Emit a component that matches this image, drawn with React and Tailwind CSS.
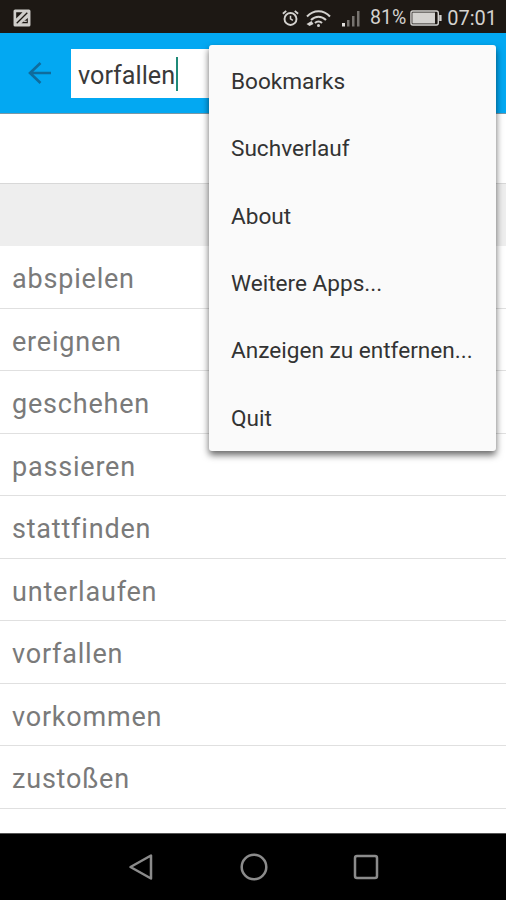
import React from "react";

const words = ["abspielen","ereignen","geschehen","passieren","stattfinden","unterlaufen","vorfallen","vorkommen","zustoßen"];
const menu = ["Bookmarks","Suchverlauf","About","Weitere Apps...","Anzeigen zu entfernen...","Quit"];

function StatusBar() {
  return (
    <div className="h-[33px] shrink-0 bg-[#1d1814] flex items-center justify-between pl-[13px] pr-[9px] pt-[2px] text-[#d4d2cf]">
      <svg width="18" height="18" viewBox="0 0 17 17">
        <rect x="0.5" y="0.5" width="16" height="16" rx="1.5" fill="#cfcdca" />
        <path d="M3 3h6L3 9z" fill="#1d1814" />
        <path d="M3.5 13.5L13.5 3.5" stroke="#1d1814" strokeWidth="1.2" />
        <path d="M8 13.5h6v-5z" fill="#1d1814" />
        <rect x="10" y="11" width="3" height="1.2" fill="#cfcdca" />
      </svg>
      <div className="flex items-center font-['Roboto',sans-serif] text-[19.500px] leading-none">
        <svg width="19" height="20" viewBox="0 0 20 20" fill="none" stroke="#d4d2cf" className="mr-[5px]">
          <circle cx="10" cy="11" r="6.3" strokeWidth="2" />
          <path d="M10 7.5V11l2.5 1.6" strokeWidth="1.6" />
          <path d="M2 5.5L5.5 2.5M18 5.5L14.500 2.500" strokeWidth="2" />
        </svg>
        <svg width="27" height="20" viewBox="0 0 27 20" fill="none" stroke="#d4d2cf" strokeWidth="2" className="mr-[9px]">
          <path d="M2 8.5C8.5 1.5 18.5 1.5 25 8.5" />
          <path d="M6 12C10.500 7.500 16.500 7.500 21 12" />
          <path d="M10 15C12 13 15 13 17 15" />
          <circle cx="13.500" cy="17.500" r="1.500" fill="#d4d2cf" stroke="none" />
          <path d="M1.500 16l5-3 2 3-4 2z" fill="#d4d2cf" stroke="none" />
        </svg>
        <svg width="21" height="20" viewBox="0 0 21 20" className="mr-[8px]">
          <rect x="1" y="15" width="3" height="3.500" fill="#e2e0dd" />
          <rect x="6" y="12" width="2.500" height="6.500" fill="#77736f" />
          <rect x="11" y="8" width="2.500" height="10.500" fill="#77736f" />
          <rect x="16" y="3" width="2.500" height="15.500" fill="#77736f" />
        </svg>
        <span>81%</span>
        <svg width="33" height="18" viewBox="0 0 35 18" className="ml-[4px] mr-[2px]" preserveAspectRatio="none">
          <rect x="1" y="2" width="29" height="14" rx="2" fill="#1d1814" stroke="#d4d2cf" strokeWidth="1.500" />
          <rect x="2.500" y="3.500" width="24" height="11" fill="#d4d2cf" />
          <rect x="31" y="6" width="2.500" height="6" fill="#d4d2cf" />
        </svg>
        <span className="text-[20px] ml-[2px]">07:01</span>
      </div>
    </div>
  );
}

function AppBar() {
  return (
    <div className="h-[81px] shrink-0 bg-[#03a8f2] border-b border-[#7b98a6] flex items-center pl-[28px]">
      <svg width="24" height="24" viewBox="0 0 24 24" fill="none" stroke="#0f6c9d" strokeWidth="2.600" className="mr-[19px]">
        <path d="M23 12H2M12.500 2L2 12l10.500 10" />
      </svg>
      <div className="w-[160px] h-[49px] bg-white flex items-center pl-[7px] pt-[5px] font-['Roboto',sans-serif] text-[25.200px] text-[#3a3a3a]">
        <span>vorfallen</span>
        <span className="w-[2px] h-[34px] -mt-[3px] ml-[1px] bg-[#1f8a78]" />
      </div>
    </div>
  );
}

export default function App() {
  return (
    <div className="relative w-[506px] h-[900px] overflow-hidden bg-white flex flex-col font-['Roboto',sans-serif]">
      <StatusBar />
      <AppBar />
      <div className="h-[69px] shrink-0 bg-white" />
      <div className="h-[63px] shrink-0 bg-[#eeeeee] border-t border-[#d8d8d8]" />
      <div className="flex-1 min-h-0 overflow-hidden">
        {words.map((w) => (
          <div key={w} className="h-[62.500px] border-b border-[#e0e0e0] flex items-center pl-[12px] pt-[5px] text-[27px] tracking-[0.8px] text-[#7a7a7a]">
            {w}
          </div>
        ))}
      </div>
      <div className="h-[67px] shrink-0 bg-black flex items-center justify-center gap-[85px] border-t border-[#555]">
        <svg width="28" height="28" viewBox="0 0 28 28" fill="none" stroke="#8b8b8b" strokeWidth="2.500" strokeLinejoin="round">
          <path d="M24 2.500V25.500L3.500 14z" />
        </svg>
        <svg width="28" height="28" viewBox="0 0 28 28" fill="none" stroke="#8b8b8b" strokeWidth="2.500">
          <circle cx="14" cy="14" r="12.300" />
        </svg>
        <svg width="26" height="26" viewBox="0 0 26 26" fill="none" stroke="#8b8b8b" strokeWidth="2.500">
          <rect x="2" y="2" width="22" height="22" rx="2" />
        </svg>
      </div>
      <div className="absolute left-[209px] top-[45px] w-[287px] h-[406px] bg-[#fafafa] rounded-[3px] shadow-[0_4px_7px_rgba(0,0,0,0.6)] pt-[3px] flex flex-col">
        {menu.map((m) => (
          <div key={m} className="h-[67.400px] shrink-0 flex items-center pl-[22px] text-[22.600px] text-[#333333] whitespace-nowrap">
            {m}
          </div>
        ))}
      </div>
    </div>
  );
}
